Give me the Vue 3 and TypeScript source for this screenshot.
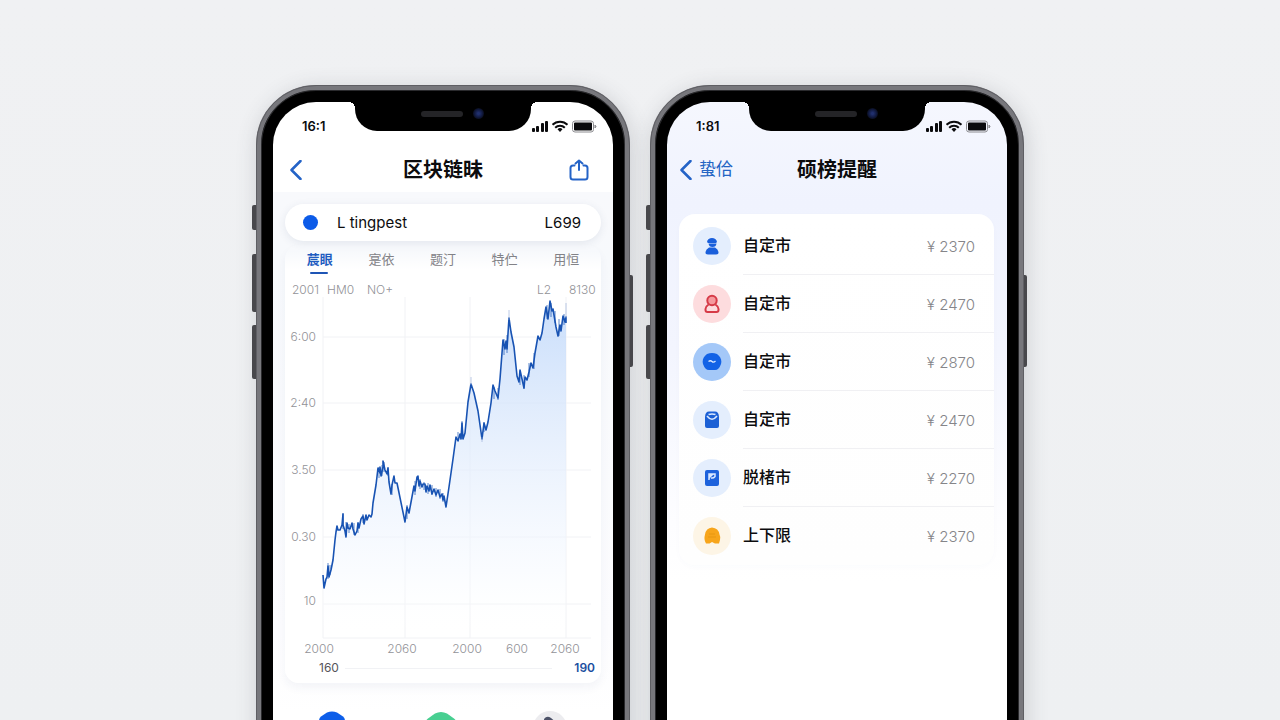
<script setup lang="ts">
import { ref } from 'vue'

interface AlertRow {
  icon: 'user' | 'medal' | 'coin' | 'bag' | 'doc' | 'bell'
  label: string
  price: string
}

const tabs: string[] = ['莀眼', '寔依', '题汀', '特伫', '用恒']
const activeTab = ref<number>(0)

const rows: AlertRow[] = [
  { icon: 'user', label: '自定市', price: '2370' },
  { icon: 'medal', label: '自定市', price: '2470' },
  { icon: 'coin', label: '自定市', price: '2870' },
  { icon: 'bag', label: '自定市', price: '2470' },
  { icon: 'doc', label: '脱楮市', price: '2270' },
  { icon: 'bell', label: '上下限', price: '2370' },
]

const yLabels = [
  { y: 58, text: '6:00' },
  { y: 124, text: '2:40' },
  { y: 191, text: '3.50' },
  { y: 258, text: '0.30' },
  { y: 322, text: '10' },
]
const gridY: number[] = [58, 124, 191, 258, 325, 359]
const gridX: number[] = [38, 120, 185, 281]
const xLabels = [
  { x: 34, text: '2000' },
  { x: 117, text: '2060' },
  { x: 182, text: '2000' },
  { x: 232, text: '600' },
  { x: 280, text: '2060' },
]
const topLabels = [
  { x: 7, text: '2001' },
  { x: 42, text: 'HM0' },
  { x: 82, text: 'NO+' },
  { x: 252, text: 'L2' },
  { x: 284, text: '8130' },
]

const line =
  '38,296 39,309 41,300 42,298 43,287 44,298 46,291 48,281 50,261 51,253 52,247 53,251 55,251 57,246 58,235 58,246 60,252 61,258 62,244 63,249 65,250 67,244 68,250 70,256 72,252 73,244 74,249 76,240 78,237 79,245 81,236 82,241 84,236 86,238 87,235 88,224 91,206 93,189 95,194 95,188 96,197 98,188 98,182 100,191 102,195 103,189 104,203 106,215 107,206 109,197 110,204 112,204 120,243 122,228 124,234 129,207 130,212 132,198 133,197 134,207 135,202 137,208 138,205 140,205 141,213 142,207 144,212 145,206 147,215 149,210 151,216 153,211 155,218 157,215 158,221 159,217 161,228 164,208 168,180 171,158 173,162 175,155 176,160 177,144 178,160 180,154 183,123 186,105 189,114 193,132 197,160 199,144 201,151 203,143 206,124 208,106 210,112 213,119 215,100 218,61 220,70 221,62 222,70 224,39 226,53 229,68 232,97 234,103 235,91 237,100 239,109 240,98 242,101 244,93 246,84 248,89 250,74 253,57 255,61 257,54 259,40 261,28 263,40 265,22 267,32 268,30 271,48 273,57 275,46 276,52 278,37 280,43 281,38 281,44'
const area = `${line} 281,359 38,359`
</script>

<template>
  <main class="stage">
    <section class="phone" aria-label="行情">
      <i class="key mute"></i><i class="key vol-up"></i><i class="key vol-down"></i><i class="key power"></i>
      <div class="screen">
        <div class="notch"><i class="speaker"></i><i class="lens"></i></div>
        <div class="status">
          <span class="time">16:1</span>
          <svg class="signals" viewBox="0 0 66 14" aria-hidden="true">
            <g fill="#0b0b0d">
              <rect x="1" y="9" width="3" height="4" rx="1" /><rect x="5" y="7" width="3" height="6" rx="1" />
              <rect x="10" y="4" width="3" height="9" rx="1" /><rect x="14" y="2" width="3" height="11" rx="1" />
              <path d="M26.500 10.200a3.600 3.600 0 0 1 5 0L29 13z" />
              <rect x="43" y="3.500" width="18" height="8" rx="1" />
            </g>
            <path d="M21.500 5.800a10.500 10.500 0 0 1 15 0M24.200 8.700a6.700 6.700 0 0 1 9.600 0" fill="none" stroke="#0b0b0d" stroke-width="2" />
            <rect x="41.500" y="2" width="21" height="11" rx="2.500" fill="none" stroke="#8c8c90" />
            <path d="M64 6v3l1-1.500z" fill="#8c8c90" stroke="#8c8c90" />
          </svg>
        </div>
        <header class="nav">
          <button class="back" aria-label="返回">
            <svg viewBox="0 0 14 20" class="chevron"><path d="M11.500 1 2.500 10l9 9" /></svg>
          </button>
          <h1>区块链昧</h1>
          <button class="share" aria-label="分享">
            <svg viewBox="0 0 20 22"><path d="M5.500 6.500H4A2.500 2.500 0 0 0 1.500 9v9A2.500 2.500 0 0 0 4 20.500h12a2.500 2.500 0 0 0 2.500-2.500V9A2.500 2.500 0 0 0 16 6.500h-1.500M10 11V2.500M6.500 4.500 10 1.500l3.500 3" /></svg>
          </button>
        </header>
        <div class="market">
          <button class="pill">
            <i class="dot"></i><span>L tingpest</span><span class="pill-value">L699</span>
          </button>
          <div class="card">
            <div class="tabs" role="tablist">
              <button
                v-for="(tab, i) in tabs"
                :key="tab"
                role="tab"
                class="tab"
                :class="{ active: i === activeTab }"
                :aria-selected="i === activeTab"
                @click="activeTab = i"
              >{{ tab }}</button>
            </div>
            <svg class="chart" viewBox="0 0 316 378" role="img" aria-label="价格走势">
              <defs>
                <linearGradient id="fade" x1="0" y1="0" x2="0" y2="1">
                  <stop offset="0" stop-color="#bcd6fa" stop-opacity="0.800" />
                  <stop offset="0.400" stop-color="#dce9fc" stop-opacity="0.700" />
                  <stop offset="0.800" stop-color="#f5f9ff" stop-opacity="0.500" />
                  <stop offset="1" stop-color="#ffffff" stop-opacity="0" />
                </linearGradient>
              </defs>
              <g class="grid">
                <line v-for="y in gridY" :key="'h' + y" x1="38" x2="306" :y1="y" :y2="y" />
                <line v-for="x in gridX" :key="'v' + x" :x1="x" :x2="x" y1="18" y2="359" />
              </g>
              <polygon :points="area" fill="url(#fade)" />
              <polyline :points="line" class="stroke" />
              <path class="tick" d="M43 284v16M45 286v10M58 234v16M61 243v14M64 245v9M69 244v12M73 243v11M78 235v9M94 188v11M97 186v11M99 183v10M103 188v9M107 205v11M122 226v14M130 202v14M135 200v10M139 203v8M143 204v11M147 206v10M151 209v9M155 210v10M158 214v9M173 153v9M177 142v18M199 143v10M209 108v12M213 109v12M219 60v16M222 56v18M235 92v14M239 96v14M244 84v14M249 74v16M262 26v14M266 24v14M270 32v12M274 40v17M279 35v11" />
              <path class="wick" d="M224 31v10M186 98v8M281 24v15M197 158v5" />
              <text v-for="t in topLabels" :key="t.text" :x="t.x" y="15">{{ t.text }}</text>
              <text v-for="t in yLabels" :key="t.text" x="31" :y="t.y + 4" text-anchor="end">{{ t.text }}</text>
              <text v-for="t in xLabels" :key="t.x" :x="t.x" y="374" text-anchor="middle">{{ t.text }}</text>
            </svg>
            <div class="range"><span>160</span><i></i><strong>190</strong></div>
          </div>
          <div class="dock" aria-hidden="true">
            <svg viewBox="0 0 40 40"><path d="M15 1.500Q20-.5 25 1.500L31 5.500Q33 7 33 10v14q0 3-3 5l-7 4q-3 1.500-6 0l-7-4q-3-2-3-5V10q0-3 2-4.500z" fill="#0d5ee9" /></svg>
            <svg viewBox="0 0 40 40"><path d="M14 2.500Q20-.5 26 2.500L33 7.500Q36 10 36 13v12q0 4-3 6l-8 4q-5 2-10 0l-8-4q-3-2-3-6V13q0-3 3-5.500z" fill="#48cf91" /></svg>
            <svg viewBox="0 0 40 40"><circle cx="20" cy="17" r="17" fill="#ececef" /><path d="M14 8q3-4 7-1l6 5v8H15z" fill="#4c5268" /></svg>
          </div>
        </div>
      </div>
    </section>

    <section class="phone" aria-label="价格提醒">
      <i class="key mute"></i><i class="key vol-up"></i><i class="key vol-down"></i><i class="key power"></i>
      <div class="screen tinted">
        <div class="notch"><i class="speaker"></i><i class="lens"></i></div>
        <div class="status">
          <span class="time">1:81</span>
          <svg class="signals" viewBox="0 0 66 14" aria-hidden="true">
            <g fill="#0b0b0d">
              <rect x="1" y="9" width="3" height="4" rx="1" /><rect x="5" y="7" width="3" height="6" rx="1" />
              <rect x="10" y="4" width="3" height="9" rx="1" /><rect x="14" y="2" width="3" height="11" rx="1" />
              <path d="M26.500 10.200a3.600 3.600 0 0 1 5 0L29 13z" />
              <rect x="43" y="3.500" width="18" height="8" rx="1" />
            </g>
            <path d="M21.500 5.800a10.500 10.500 0 0 1 15 0M24.200 8.700a6.700 6.700 0 0 1 9.600 0" fill="none" stroke="#0b0b0d" stroke-width="2" />
            <rect x="41.500" y="2" width="21" height="11" rx="2.500" fill="none" stroke="#8c8c90" />
            <path d="M64 6v3l1-1.500z" fill="#8c8c90" stroke="#8c8c90" />
          </svg>
        </div>
        <header class="nav">
          <button class="back labelled">
            <svg viewBox="0 0 14 20" class="chevron" aria-hidden="true"><path d="M11.500 1 2.500 10l9 9" /></svg>
            <span>蛰佮</span>
          </button>
          <h1>硕榜提醒</h1>
          <span></span>
        </header>
        <ul class="alerts">
          <li v-for="(row, i) in rows" :key="i">
            <button class="row">
              <span class="badge" :class="row.icon">
                <svg v-if="row.icon === 'user'" viewBox="0 0 20 20">
                  <path d="M5 6C5.500 .5 14.500 .5 15 6l-1 1H6zM6.500 7.500h8q-.5 3.500-4 3.500t-4-3.500z" fill="#1a5fdb" />
                  <path d="M7 11.500h6q3 1.500 3.500 4.500.3 2.500-2.500 2.500H6q-2.800 0-2.500-2.500Q4 13 7 11.500z" fill="#1a5fdb" />
                </svg>
                <svg v-else-if="row.icon === 'medal'" viewBox="0 0 20 20">
                  <circle cx="10" cy="6.500" r="4.700" fill="#f59a9e" stroke="#d63a47" stroke-width="2" />
                  <path d="M6 11q-2.500 1.500-2.500 4v1q0 2 2 2h9q2 0 2-2v-1q0-2.500-2.500-4" fill="none" stroke="#d63a47" stroke-width="2" stroke-linecap="round" />
                </svg>
                <svg v-else-if="row.icon === 'coin'" viewBox="0 0 20 20">
                  <path d="M5 2Q10 0 15 2q5.500 4 4 10-2 6-6 6H7q-4 0-6-6Q-.5 6 5 2z" fill="#1262e6" />
                  <path d="M6.500 9.500q2-1.500 3.500 0t3.500-.5" fill="none" stroke="#d9e8ff" stroke-width="1.300" />
                </svg>
                <svg v-else-if="row.icon === 'bag'" viewBox="0 0 20 20">
                  <path d="M3 6.500Q3.500 1.500 7 1.500h6q3.500 0 4 5V16q0 2-2 2H5q-2 0-2-2z" fill="#1c60d5" />
                  <path d="M5 6q5 6.500 10 0M6.500 4.500q3.500-1 7 0" fill="none" stroke="#dbe9ff" stroke-width="1.500" />
                </svg>
                <svg v-else-if="row.icon === 'doc'" viewBox="0 0 20 20">
                  <rect x="3" y="2" width="14" height="16" rx="2" fill="#1d62dc" />
                  <path d="M7 12V6h6v2.500q-1.500 2-4 1.500" fill="none" stroke="#d9e8ff" stroke-width="1.500" />
                  <path d="M7 6h5l-2.500 2.500L7 11z" fill="#d9e8ff" />
                </svg>
                <svg v-else viewBox="0 0 20 20">
                  <path d="M10 1.500q6.500.5 7.500 7 1.500 3 .5 5.500L17 17.500h-4L10 16l-2.500 1.500H4q-2.500-4-1-9 1-6.500 7-7z" fill="#f7a51b" />
                  <path d="M7 8h6M6 11h8" stroke="#e79713" />
                </svg>
              </span>
              <span class="name">{{ row.label }}</span>
              <span class="price">¥ {{ row.price }}</span>
            </button>
          </li>
        </ul>
      </div>
    </section>
  </main>
</template>

<style>
body {
  margin: 0;
  background: #eff0f2;
}
</style>

<style scoped>
* {
  box-sizing: border-box;
}
button {
  border: 0;
  padding: 0;
  background: none;
  font: inherit;
  color: inherit;
  cursor: pointer;
}
.stage {
  display: flex;
  justify-content: center;
  align-items: flex-start;
  gap: 20px;
  height: 100vh;
  padding-top: 85px;
  overflow: hidden;
  background: linear-gradient(#f0f1f3, #eef0f2);
  font-family: "Liberation Sans", "Noto Sans CJK SC", sans-serif;
  color: #0c0c0e;
}
.phone {
  position: relative;
  flex: 0 0 374px;
  min-height: 760px;
  padding: 12px;
  border: 5px solid #77777c;
  border-radius: 60px;
  background: #000;
  box-shadow: inset 0 0 0 1px #2a2a2d, 2px 4px 22px rgba(60, 65, 75, 0.2);
}
.phone::before {
  content: "";
  position: absolute;
  inset: -5px;
  border: 1px solid #5f5f64;
  border-radius: 60px;
  pointer-events: none;
}
.key {
  position: absolute;
  left: -9px;
  width: 4px;
  border-radius: 2px 0 0 2px;
  background: #48484c;
}
.mute { top: 115px; height: 25px; }
.vol-up { top: 164px; height: 58px; }
.vol-down { top: 235px; height: 54px; }
.power { top: 185px; right: -8px; left: auto; width: 3px; height: 92px; border-radius: 0 2px 2px 0; }
.screen {
  position: relative;
  min-height: 726px;
  border-radius: 43px;
  overflow: hidden;
  background: #fff;
}
.tinted {
  background: linear-gradient(#f5f7fe, #f0f3fe 100px, #f3f5fe 250px, #fdfdff 420px, #fff 480px);
}
.notch {
  position: absolute;
  top: -6px;
  left: 50%;
  width: 176px;
  height: 35px;
  margin-left: -88px;
  border-radius: 0 0 22px 22px;
  background: #000;
}
.notch::before,
.notch::after {
  content: "";
  position: absolute;
  top: 6px;
  width: 6px;
  height: 6px;
}
.notch::before { right: 100%; background: radial-gradient(circle at 0 100%, transparent 6px, #000 6px); }
.notch::after { left: 100%; background: radial-gradient(circle at 100% 100%, transparent 6px, #000 6px); }
.speaker {
  position: absolute;
  top: 15px;
  left: 66px;
  width: 42px;
  height: 6px;
  border-radius: 3px;
  background: #242427;
}
.lens {
  position: absolute;
  top: 12px;
  left: 118px;
  width: 11px;
  height: 11px;
  border-radius: 50%;
  background: radial-gradient(circle, #202f6c 0 1px, #10183c 4px, #080a14 6px);
}
.status {
  display: flex;
  align-items: center;
  justify-content: space-between;
  height: 48px;
  padding: 0 16px 0 29px;
}
.time {
  font: 600 13px "Inter", sans-serif;
}
.signals {
  width: 66px;
  height: 14px;
}
.nav {
  display: grid;
  grid-template-columns: 1fr auto 1fr;
  align-items: center;
  height: 42px;
  padding: 0 24px 2px;
}
h1 {
  margin: 0;
  font-size: 20px;
  line-height: 28px;
  font-weight: 700;
}
.back {
  display: flex;
  align-items: center;
  gap: 6px;
  justify-self: start;
  margin-left: -8px;
  font-size: 17px;
  line-height: 24px;
  color: #2465c4;
}
.labelled {
  margin-left: -12px;
}
.chevron {
  width: 14px;
  height: 20px;
}
.chevron path,
.share path {
  fill: none;
  stroke: #2463c7;
  stroke-width: 2;
  stroke-linecap: round;
  stroke-linejoin: round;
}
.chevron path {
  stroke-width: 2.500;
}
.share {
  justify-self: end;
}
.share svg {
  display: block;
  width: 20px;
  height: 22px;
}
.market {
  min-height: 640px;
  padding: 12px 12px 0;
  background: linear-gradient(#f8f9fc, #f7f9fc 70px, #fcfcfe 440px, #fff 520px);
}
.pill {
  display: flex;
  align-items: center;
  width: 100%;
  height: 37px;
  padding: 0 20px 0 18px;
  border-radius: 19px;
  background: #fff;
  box-shadow: 0 2px 8px rgba(45, 65, 110, 0.1);
  font: 15px "Inter", sans-serif;
}
.dot {
  width: 15px;
  height: 15px;
  margin-right: 19px;
  border-radius: 50%;
  background: #0c5be8;
}
.pill-value {
  margin-left: auto;
}
.card {
  margin-top: 4px;
  padding-bottom: 4px;
  border-radius: 14px;
  background: linear-gradient(rgba(255, 255, 255, 0) 6px, #fff 24px);
  box-shadow: 0 5px 10px rgba(45, 65, 110, 0.05);
}
.tabs {
  display: grid;
  grid-template-columns: repeat(5, 1fr);
  padding: 0 4px 4px;
}
.tab {
  position: relative;
  height: 30px;
  font-size: 13px;
  line-height: 30px;
  color: #828287;
}
.tab.active {
  font-weight: 700;
  color: #1e5cc0;
}
.tab.active::after {
  content: "";
  position: absolute;
  bottom: 1px;
  left: 50%;
  width: 18px;
  height: 2px;
  margin-left: -10px;
  border-radius: 1px;
  background: #1e55b5;
}
.chart {
  display: block;
  width: 100%;
  font: 300 12px "Inter", sans-serif;
}
.chart text {
  fill: #929297;
}
.grid line {
  stroke: #f1f2f5;
  stroke-width: 1;
}
.stroke {
  fill: none;
  stroke: #1853b3;
  stroke-width: 1.600;
  stroke-linejoin: round;
}
.tick {
  fill: none;
  stroke: #1853b3;
  stroke-opacity: 0.700;
}
.wick {
  fill: none;
  stroke: #8fa9d6;
  stroke-opacity: 0.600;
}
.range {
  display: flex;
  align-items: center;
  gap: 6px;
  padding: 0 6px 0 34px;
  font: 12px/22px "Inter", sans-serif;
  color: #55555a;
}
.range i {
  flex: 1;
  height: 1px;
  margin-right: 16px;
  background: #f1f2f5;
}
.range strong {
  font-weight: 600;
  color: #1c4f9f;
}
.dock {
  display: grid;
  grid-template-columns: repeat(3, 1fr);
  justify-items: center;
  margin: 0 -4px 0 -8px;
  padding: 28px 0 0;
}
.dock svg {
  width: 40px;
  height: 40px;
}
.alerts {
  margin: 22px 13px 0 12px;
  padding: 3px 0 0;
  border-radius: 16px;
  list-style: none;
  background: linear-gradient(#fff, #fefefe);
  box-shadow: 0 2px 6px rgba(70, 80, 130, 0.02);
}
.row {
  display: flex;
  align-items: center;
  position: relative;
  width: 100%;
  height: 58px;
  padding: 0 19px 0 14px;
}
li + li .row::before {
  content: "";
  position: absolute;
  top: -1px;
  right: 0;
  left: 64px;
  height: 1px;
  background: #f0f0f3;
}
.badge {
  display: grid;
  place-items: center;
  width: 38px;
  height: 38px;
  margin-right: 12px;
  border-radius: 50%;
  background: #e4eefd;
}
.badge svg {
  width: 20px;
  height: 20px;
}
.badge.medal { background: #fddcde; }
.badge.coin { background: #a4c8f8; }
.badge.bell { background: #fdf5e6; }
.name {
  font-size: 16px;
  line-height: 24px;
  font-weight: 500;
}
.price {
  margin-left: auto;
  font: 300 15px "Inter", sans-serif;
  color: #858589;
}
</style>
